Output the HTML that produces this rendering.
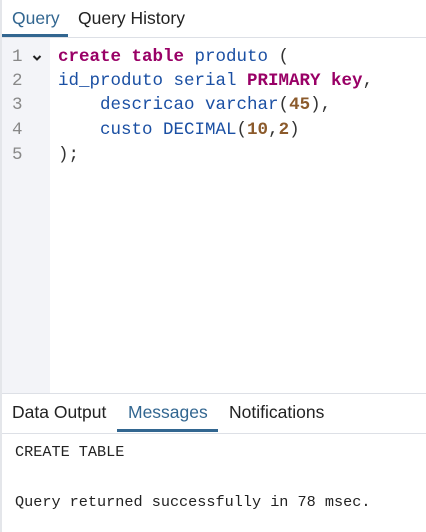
<!DOCTYPE html>
<html><head><style>
body{margin:0;width:426px;height:532px;background:#fff;position:relative;overflow:hidden;font-family:"Liberation Sans",sans-serif;}
.lb{position:absolute;left:0;top:0;width:2px;height:532px;background:#e4e6ea}
.tabs{position:absolute;left:2px;top:0;width:424px;height:37px;border-bottom:1px solid #dde0e6}
.tab{position:absolute;top:8px;font-size:17.5px;color:#222}
.ul{position:absolute;height:3px;background:#326690}
.gut{position:absolute;left:2px;top:38px;width:48px;height:355px;background:#f3f4f8}
.l{position:absolute;left:58px;font-family:"Liberation Mono",monospace;font-size:17.5px;line-height:24px;white-space:pre;color:#1a4fa3}
.ln{position:absolute;left:12px;font-family:"Liberation Mono",monospace;font-size:17.5px;line-height:24px;color:#888}
.k{color:#990066;font-weight:bold}
.n{color:#8b5a2b;font-weight:bold}
.p{color:#333}
.out{position:absolute;left:15px;font-family:"Liberation Mono",monospace;font-size:15.2px;color:#222;white-space:pre}
</style></head><body>
<div class="lb"></div>
<div class="tabs">
<div class="tab" style="left:10px;color:#326690">Query</div>
<div class="tab" style="left:76px">Query History</div>
<div class="ul" style="left:0;width:66px;top:34px"></div>
</div>
<div class="gut"></div>
<div class="ln" style="top:45px">1</div>
<svg style="position:absolute;left:32px;top:54px" width="10" height="8" viewBox="0 0 10 8"><path d="M1.5 2 L5 5.5 L8.5 2" stroke="#222" stroke-width="2" fill="none"/></svg>
<div class="l" style="top:45px"><span class="k">create table</span> produto <span class="p">(</span></div>
<div class="ln" style="top:69px">2</div>
<div class="l" style="top:69px">id_produto serial <span class="k">PRIMARY key</span><span class="p">,</span></div>
<div class="ln" style="top:93px">3</div>
<div class="l" style="top:93px">    descricao varchar<span class="p">(</span><span class="n">45</span><span class="p">),</span></div>
<div class="ln" style="top:118px">4</div>
<div class="l" style="top:118px">    custo DECIMAL<span class="p">(</span><span class="n">10</span><span class="p">,</span><span class="n">2</span><span class="p">)</span></div>
<div class="ln" style="top:143px">5</div>
<div class="l" style="top:143px"><span class="p">);</span></div>
<div style="position:absolute;left:2px;top:393px;width:424px;height:39px;border-top:1px solid #dde0e6;border-bottom:1px solid #dde0e6">
<div class="tab" style="left:10px;top:8px">Data Output</div>
<div class="tab" style="left:126px;top:8px;color:#326690">Messages</div>
<div class="tab" style="left:227px;top:8px">Notifications</div>
<div class="ul" style="left:115px;width:101px;top:35px"></div>
</div>
<div class="out" style="top:443px">CREATE TABLE</div>
<div class="out" style="top:493px">Query returned successfully in 78 msec.</div>
</body></html>
